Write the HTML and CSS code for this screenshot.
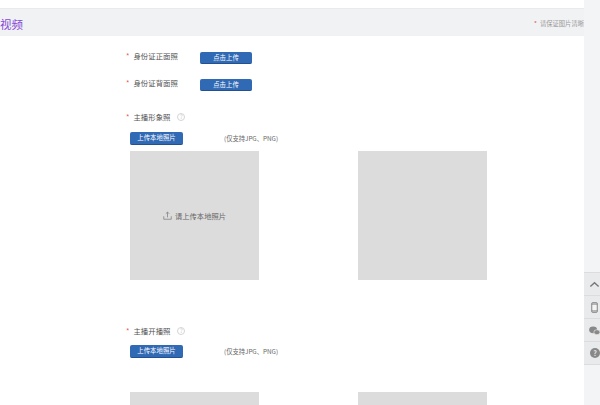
FILE: index.html
```html
<!DOCTYPE html>
<html lang="zh">
<head>
<meta charset="utf-8">
<title>视频</title>
<link rel="stylesheet" href="styles.css">
</head>
<body>
<div class="page">
  <main class="main">
    <header class="band">
      <h2 class="band-title">视频</h2>
      <p class="band-note"><span class="star">*</span>请保证图片清晰</p>
    </header>
    <section class="form">
      <div class="id-row">
        <span class="label"><span class="star">*</span>身份证正面照</span>
        <button class="btn btn-id">点击上传</button>
      </div>
      <div class="id-row id-row-2">
        <span class="label"><span class="star">*</span>身份证背面照</span>
        <button class="btn btn-id">点击上传</button>
      </div>
      <div class="label-row label-row-1">
        <span class="label"><span class="star">*</span>主播形象照</span>
        <span class="help">?</span>
      </div>
      <div class="upload-row upload-row-1">
        <button class="btn btn-upload">上传本地照片</button>
        <span class="hint">(仅支持JPG、PNG)</span>
      </div>
      <div class="tiles">
        <div class="tile">
          <svg class="up-icon" viewBox="0 0 12 12" width="10" height="10" aria-hidden="true"><path d="M1 7v4h10V7M6 8.5V1.5M3.8 3.6 6 1.4l2.2 2.2" fill="none" stroke="#7d7d7d" stroke-width="1"/></svg>
          <span>请上传本地照片</span>
        </div>
        <div class="tile"></div>
      </div>
      <div class="label-row label-row-2">
        <span class="label"><span class="star">*</span>主播开播照</span>
        <span class="help">?</span>
      </div>
      <div class="upload-row">
        <button class="btn btn-upload">上传本地照片</button>
        <span class="hint">(仅支持JPG、PNG)</span>
      </div>
      <div class="tiles tiles-2">
        <div class="tile"></div>
        <div class="tile"></div>
      </div>
    </section>
  </main>
  <aside class="gutter"></aside>
</div>
<nav class="tools">
  <div class="tool"><svg viewBox="0 0 16 16" aria-hidden="true"><path d="M2 11 8 5.5 14 11" fill="none" stroke="#777" stroke-width="2"/></svg></div>
  <div class="tool"><svg viewBox="0 0 16 16" aria-hidden="true"><rect x="4" y="1" width="8" height="14" rx="1" fill="#f4f4f4" stroke="#777" stroke-width="1.3"/><path d="M4 3h8M4 13h8" stroke="#777" stroke-width="1.3"/></svg></div>
  <div class="tool"><svg viewBox="0 0 16 16" aria-hidden="true"><ellipse cx="6" cy="7" rx="5.8" ry="5" fill="#888"/><ellipse cx="11.5" cy="10.5" rx="4.5" ry="3.6" fill="#888" stroke="#e9eaec" stroke-width="1"/></svg></div>
  <div class="tool"><span class="tool-q">?</span></div>
</nav>
</body>
</html>
```
FILE: styles.css
```css
* { box-sizing: border-box; }
html, body { margin: 0; padding: 0; height: 405px; overflow: hidden; background: #fff; }
body { font-family: "Noto Sans CJK SC", "Liberation Sans", sans-serif; color: #555; }
.page { display: flex; height: 405px; }
.main { width: 584px; flex: none; padding-top: 8px; overflow: hidden; }
.gutter { flex: 1; background: #f3f4f6; }
.band { height: 28px; background: #f1f2f4; border-top: 1px solid #e9eaec; display: flex; justify-content: space-between; align-items: center; }
.band-title { margin: 0; font-size: 11.5px; font-weight: 400; line-height: 18px; color: #8448d6; padding-top: 2px; }
.band-note { margin: 0; font-size: 6.3px; line-height: 10px; color: #999; white-space: nowrap; padding-top: 2px; }
.star { color: #e25555; margin-right: 4px; }
.band-note .star { margin-right: 3px; }
.form { padding-left: 126px; }
.label { font-size: 7.4px; line-height: 12px; color: #555; white-space: nowrap; }
.id-row { display: flex; align-items: center; height: 13px; margin-top: 15px; }
.id-row .label { width: 74px; margin-top: -3px; }
.id-row-2 { margin-top: 14px; }
.btn { display: block; border: 0; border-bottom: 1px solid #24508f; border-radius: 2px; padding: 0; background: #3069b4; color: #fff; font: inherit; font-size: 6.4px; line-height: 12px; text-align: center; }
.btn-id { width: 52px; height: 12px; }
.btn-upload { width: 53px; height: 13px; }
.label-row { display: flex; align-items: center; height: 12px; }
.label-row-1 { margin-top: 20px; }
.label-row-2 { margin-top: 45px; }
.help { margin-left: 7px; width: 8px; height: 8px; border: 1px solid #d5d5d5; border-radius: 50%; font-size: 5.5px; line-height: 6px; text-align: center; color: #c0c0c0; }
.upload-row { display: flex; align-items: center; margin: 8px 0 0 4px; height: 13px; }
.upload-row-1 { margin-top: 9px; }
.hint { margin-left: 41px; font-size: 6.3px; color: #666; white-space: nowrap; }
.tiles { display: flex; gap: 99px; margin: 6px 0 0 4px; }
.tiles-2 { margin-top: 34px; }
.tile { width: 129px; height: 129px; flex: none; background: #dcdcdc; display: flex; align-items: center; justify-content: center; gap: 3px; font-size: 7.3px; color: #666; }
.up-icon { flex: none; width: 9px; height: 9px; }
.tools { position: absolute; left: 584px; top: 272px; width: 16px; background: #e9eaec; border-top: 1px solid #dcdcdc; }
.tool { height: 23px; border-bottom: 1px solid #dcdcdc; display: flex; align-items: center; padding-left: 5px; overflow: hidden; }
.tool svg { flex: none; width: 11px; height: 11px; }
.tool-q { width: 10px; height: 10px; flex: none; margin-left: 1px; border-radius: 50%; background: #888; color: #e9eaec; font-size: 7px; line-height: 10px; text-align: center; font-weight: 700; }
```
